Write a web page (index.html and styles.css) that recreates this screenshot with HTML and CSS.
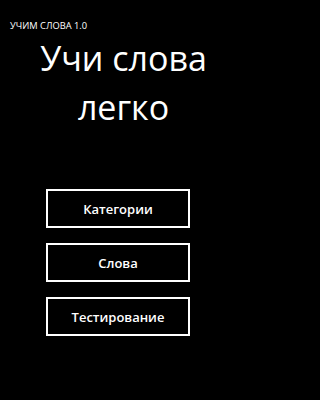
FILE: index.html
```html
<!DOCTYPE html>
<html lang="ru">
<head>
<meta charset="utf-8">
<link rel="stylesheet" href="styles.css">
</head>
<body>
<div class="app">
  <header class="header">
    <div class="app-title">УЧИМ СЛОВА 1.0</div>
    <h1 class="page-title">Учи слова<br>легко</h1>
  </header>
  <nav class="menu">
    <button class="btn">Категории</button>
    <button class="btn">Слова</button>
    <button class="btn">Тестирование</button>
  </nav>
</div>
</body>
</html>
```
FILE: styles.css
```css
html, body {
  margin: 0;
  padding: 0;
  background: #000;
  color: #fff;
  font-family: "Open Sans", "Noto Sans", sans-serif;
}
.app {
  width: 240px;
  height: 400px;
  box-sizing: border-box;
  padding-top: 20px;
}
.header {
  display: flex;
  flex-direction: column;
}
.app-title {
  font-size: 9.3px;
  line-height: 12px;
  padding-left: 10px;
}
.page-title {
  margin: 0;
  margin-top: 2px;
  font-weight: 400;
  font-size: 34px;
  line-height: 49px;
  text-align: center;
  padding-left: 7px;
}
.menu {
  display: flex;
  flex-direction: column;
  align-items: center;
  gap: 15px;
  margin-top: 57px;
  padding-right: 4px;
}
.btn {
  width: 144px;
  height: 39px;
  box-sizing: border-box;
  border: 2px solid #fff;
  background: #000;
  color: #fff;
  font-family: "Open Sans", "Noto Sans", sans-serif;
  font-weight: 600;
  font-size: 13px;
  padding: 0;
}
```
